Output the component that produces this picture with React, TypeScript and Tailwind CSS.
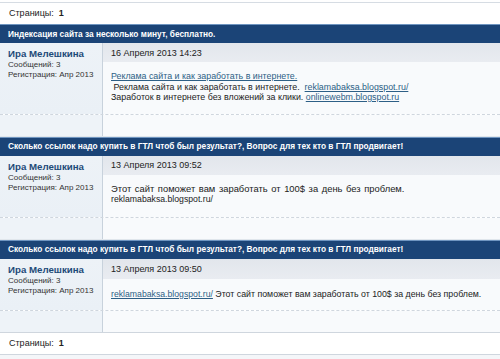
import React from "react";

const F = { fontFamily: '"Liberation Sans", Arial, sans-serif' };

function Link({ children }: { children: React.ReactNode }) {
  return <span className="text-[#2d5f86] underline decoration-[#2d5f86]">{children}</span>;
}

function Post({
  title,
  date,
  children,
  bodyClass,
  dateClass,
  sigClass,
}: {
  title: string;
  date: string;
  children: React.ReactNode;
  bodyClass: string;
  dateClass: string;
  sigClass: string;
}) {
  return (
    <div>
      <div className="h-[19px] bg-[#1b4477] border-t border-[#6f95c0] flex items-center px-[8px] text-white font-bold text-[8.3px] whitespace-nowrap">
        {title}
      </div>
      <div className="flex border-b border-dashed border-[#cfd6de]">
        <div className="w-[103px] shrink-0 border-r border-[#c8d2dc] bg-gradient-to-b from-[#edf2f7] to-[#eaf0f6] px-[8px] pt-[5px] flex flex-col">
          <div className="text-[9.7px] font-bold text-[#1d4a79] leading-[12px]">Ира Мелешкина</div>
          <div className="text-[8px] text-[#333] leading-[10px]">Сообщений: 3</div>
          <div className="text-[8px] text-[#333] leading-[10px]">Регистрация: Апр 2013</div>
        </div>
        <div className="flex-1 min-w-0 flex flex-col bg-[#f8fafc]">
          <div className={"bg-gradient-to-b from-[#e2e6ec] to-[#e9ecf1] flex items-center px-[8px] pt-[2px] text-[9px] text-[#222] " + dateClass}>
            {date}
          </div>
          <div className={"px-[8px] text-[#222] leading-[10.5px] " + bodyClass}>
            {children}
          </div>
        </div>
      </div>
      <div className={"flex " + sigClass}>
        <div className="w-[103px] shrink-0 border-r border-[#c8d2dc] bg-[#eef3f8]" />
        <div className="flex-1 bg-[#f8fafc]" />
      </div>
    </div>
  );
}

export default function App() {
  return (
    <div className="w-[500px] h-[359px] bg-white overflow-hidden" style={F}>
      <div className="h-[2px] bg-white" />
      <div className="h-[22px] border-t border-[#d6dce3] flex items-center px-[9px] pt-[1px] text-[9px] text-[#222]">
        Страницы:&nbsp;&nbsp;<span className="font-bold">1</span>
      </div>
      <Post
        title="Индексация сайта за несколько минут, бесплатно."
        date="16 Апреля 2013 14:23"
        dateClass="h-[19px]"
        bodyClass="pt-[9px] pb-[11px] text-[8.85px]"
        sigClass="h-[21px]"
      >
        <div className="whitespace-nowrap"><Link>Реклама сайта и как заработать в интернете.</Link></div>
        <div className="whitespace-nowrap">&nbsp;Реклама сайта и как заработать в интернете.&nbsp; <Link>reklamabaksa.blogspot.ru/</Link></div>
        <div className="whitespace-nowrap">Заработок в интернете без вложений за клики. <Link>onlinewebm.blogspot.ru</Link></div>
      </Post>
      <div className="h-[1px] bg-[#e0e6ec]" />
      <Post
        title="Сколько ссылок надо купить в ГТЛ чтоб был результат?, Вопрос для тех кто в ГТЛ продвигает!"
        date="13 Апреля 2013 09:52"
        dateClass="h-[19px]"
        bodyClass="pt-[9px] pb-[12px] text-[9px]"
        sigClass="h-[21px]"
      >
        <div className="whitespace-nowrap text-[9.4px] [word-spacing:1px]">Этот сайт поможет вам заработать от 100$ за день без проблем.</div>
        <div className="whitespace-nowrap text-[8.7px]">reklamabaksa.blogspot.ru/</div>
      </Post>
      <div className="h-[1px] bg-[#e0e6ec]" />
      <Post
        title="Сколько ссылок надо купить в ГТЛ чтоб был результат?, Вопрос для тех кто в ГТЛ продвигает!"
        date="13 Апреля 2013 09:50"
        dateClass="h-[20px]"
        bodyClass="pt-[10px] pb-[11px] text-[9px]"
        sigClass="h-[21px]"
      >
        <div className="whitespace-nowrap">
          <span className="text-[8.7px]"><Link>reklamabaksa.blogspot.ru/</Link></span>
          <span className="text-[8.8px]"> Этот сайт поможет вам заработать от 100$ за день без проблем.</span>
        </div>
      </Post>
      <div className="h-[23px] border-t border-b border-[#cfd6de] flex items-center px-[9px] text-[9px] text-[#222]">
        Страницы:&nbsp;&nbsp;<span className="font-bold">1</span>
      </div>
      <div className="h-[10px] bg-[#f4f6f9]" />
    </div>
  );
}
